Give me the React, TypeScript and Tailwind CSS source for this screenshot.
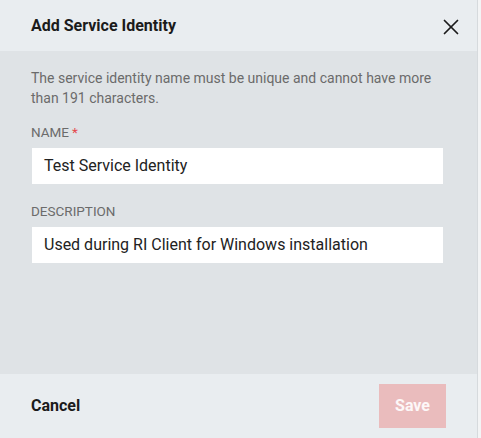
import { X } from "lucide-react"

export default function App() {
  return (
    <div className="w-[481px] h-[438px] bg-[#f3f4f5] font-['Roboto',sans-serif]">
      <div className="w-[478px] h-[438px] flex flex-col border-r border-[#d6dadd]">
        {/* Header */}
        <div className="h-[51px] shrink-0 bg-[#e9edf0] flex items-center justify-between pl-[31px] pr-[13px]">
          <h2 className="text-[16px] font-bold text-[#1b1b1b]">Add Service Identity</h2>
          <button className="text-[#1b1b1b] mt-[2px]">
            <X className="w-[26px] h-[26px]" strokeWidth={1.6} />
          </button>
        </div>

        {/* Body */}
        <div className="flex-1 bg-[#dfe3e6] pl-[31px] pr-[34px] pt-[17px]">
          <p className="text-[14px] leading-[20px] text-[#6b6b6b]">
            The service identity name must be unique and cannot have more than 191 characters.
          </p>

          <label className="block mt-[16px] text-[13.5px] leading-[16px] text-[#6b6b6b] uppercase">
            Name<span className="text-[#e5484d] ml-[3px]">*</span>
          </label>
          <div className="mt-[8px] ml-[1px] h-[36px] bg-white flex items-center px-[12px] text-[16px] text-[#222]">
            Test Service Identity
          </div>

          <label className="block mt-[19px] text-[13.5px] leading-[16px] text-[#6b6b6b] uppercase">
            Description
          </label>
          <div className="mt-[8px] ml-[1px] h-[36px] bg-white flex items-center px-[12px] text-[16px] text-[#222]">
            Used during RI Client for Windows installation
          </div>
        </div>

        {/* Footer */}
        <div className="h-[64px] shrink-0 bg-[#e9edf0] flex items-center justify-between pl-[31px] pr-[31px]">
          <button className="text-[16px] font-bold text-[#1b1b1b]">Cancel</button>
          <button className="w-[67px] h-[44px] bg-[#eabcbd] text-white/90 text-[16px] font-bold">
            Save
          </button>
        </div>
      </div>
    </div>
  )
}
